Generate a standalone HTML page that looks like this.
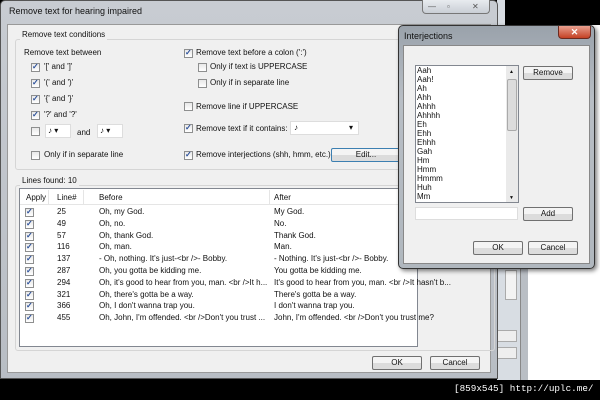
<!DOCTYPE html>
<html><head><meta charset="utf-8"><style>
*{box-sizing:border-box;margin:0;padding:0}
body{width:600px;height:400px;overflow:hidden;background:#000;position:relative;font-family:"Liberation Sans",sans-serif;font-size:8px;color:#111}
.a{position:absolute}
.t{position:absolute;white-space:nowrap;font-size:8px;line-height:10px}
.cb{position:absolute;width:9px;height:9px;border:1px solid #8e8f8f;background:linear-gradient(#e8e8e8,#fff)}
.cb.c::after{content:"✓";position:absolute;left:0px;top:-2px;font-size:8px;color:#2a4f99;font-weight:bold}
.btn{position:absolute;border:1px solid #707070;border-radius:2px;background:linear-gradient(#f4f4f4 50%,#dcdcdc 50%);font-size:8px;text-align:center;line-height:12px}
</style></head><body>
<div class="a" style="left:497px;top:0;width:32px;height:380px;background:#d8dde3"></div>
<div class="a" style="left:505px;top:0;width:95px;height:25px;background:#000"></div>
<div class="a" style="left:520px;top:25px;width:8px;height:355px;background:#b9bec4;border-left:1px solid #888"></div>
<div class="a" style="left:528px;top:25px;width:72px;height:355px;background:#fff"></div>
<div class="a" style="left:505px;top:270px;width:12px;height:30px;background:#f3f3f3;border:1px solid #aaa"></div>
<div class="a" style="left:497px;top:330px;width:20px;height:12px;background:#eee;border:1px solid #aaa"></div>
<div class="a" style="left:497px;top:347px;width:20px;height:12px;background:#eee;border:1px solid #aaa"></div>
<div class="a" style="left:0;top:0;width:498px;height:379px;background:linear-gradient(#c8ccd2,#b8bdc4);border:1px solid #555;border-radius:5px 5px 0 0"></div>
<div class="t" style="left:9px;top:6px;font-size:9px">Remove text for hearing impaired</div>
<div class="a" style="left:422px;top:0;width:68px;height:14px;border:1px solid #777;border-top:none;border-radius:0 0 4px 4px;background:linear-gradient(#e8ebef,#c9ced5)"></div>
<div class="t" style="left:428px;top:2px;color:#555">—</div>
<div class="t" style="left:447px;top:2px;color:#555">▫</div>
<div class="t" style="left:472px;top:2px;color:#555">✕</div>
<div class="a" style="left:7px;top:24px;width:484px;height:349px;background:#f0f0f0;border:1px solid #999"></div>
<div class="a" style="left:15px;top:39px;width:480px;height:131px;border:1px solid #d5d5d5;border-radius:3px"></div>
<div class="t" style="left:20px;top:30px;background:#f0f0f0;padding:0 2px">Remove text conditions</div>
<div class="t" style="left:24px;top:48px">Remove text between</div>
<div class="cb c" style="left:31px;top:63px"></div><div class="t" style="left:44px;top:62px">'[' and ']'</div>
<div class="cb c" style="left:31px;top:79px"></div><div class="t" style="left:44px;top:78px">'(' and ')'</div>
<div class="cb c" style="left:31px;top:95px"></div><div class="t" style="left:44px;top:94px">'{' and '}'</div>
<div class="cb c" style="left:31px;top:111px"></div><div class="t" style="left:44px;top:110px">'?' and '?'</div>
<div class="cb" style="left:31px;top:127px"></div>
<div class="a" style="left:45px;top:124px;width:26px;height:14px;background:#fff;border:1px solid #ddd"></div><div class="t" style="left:48px;top:126px">♪ ▾</div>
<div class="t" style="left:77px;top:128px">and</div>
<div class="a" style="left:97px;top:124px;width:26px;height:14px;background:#fff;border:1px solid #ddd"></div><div class="t" style="left:100px;top:126px">♪ ▾</div>
<div class="cb" style="left:31px;top:151px"></div><div class="t" style="left:44px;top:150px">Only if in separate line</div>
<div class="cb c" style="left:184px;top:49px"></div><div class="t" style="left:196px;top:48px">Remove text before a colon (':')</div>
<div class="cb" style="left:198px;top:63px"></div><div class="t" style="left:210px;top:62px">Only if text is UPPERCASE</div>
<div class="cb" style="left:198px;top:79px"></div><div class="t" style="left:210px;top:78px">Only if in separate line</div>
<div class="cb" style="left:184px;top:102px"></div><div class="t" style="left:196px;top:102px">Remove line if UPPERCASE</div>
<div class="cb c" style="left:184px;top:124px"></div><div class="t" style="left:196px;top:124px">Remove text if it contains:</div>
<div class="a" style="left:290px;top:121px;width:69px;height:14px;background:#fff;border:1px solid #ddd"></div><div class="t" style="left:294px;top:123px">♪</div><div class="t" style="left:349px;top:123px">▾</div>
<div class="cb c" style="left:184px;top:151px"></div><div class="t" style="left:196px;top:150px">Remove interjections (shh, hmm, etc.)</div>
<div class="btn" style="left:331px;top:148px;width:70px;height:14px;border-color:#3c7fb1">Edit...</div>
<div class="a" style="left:15px;top:185px;width:480px;height:166px;border:1px solid #d5d5d5;border-radius:3px"></div>
<div class="t" style="left:20px;top:176px;background:#f0f0f0;padding:0 2px">Lines found: 10</div>
<div class="a" style="left:19px;top:188px;width:399px;height:159px;background:#fff;border:1px solid #828790"></div>
<div class="a" style="left:20px;top:189px;width:398px;height:16px;background:#fff;border-bottom:1px solid #e5e5e5"></div>
<div class="a" style="left:48px;top:190px;width:1px;height:14px;background:#e5e5e5"></div>
<div class="a" style="left:83px;top:190px;width:1px;height:14px;background:#e5e5e5"></div>
<div class="a" style="left:269px;top:190px;width:1px;height:14px;background:#e5e5e5"></div>
<div class="t" style="left:26px;top:193px">Apply</div><div class="t" style="left:57px;top:193px">Line#</div><div class="t" style="left:99px;top:193px">Before</div><div class="t" style="left:274px;top:193px">After</div>
<div id="rows"></div>
<div class="btn" style="left:372px;top:356px;width:50px;height:14px">OK</div>
<div class="btn" style="left:430px;top:356px;width:50px;height:14px">Cancel</div>
<div class="a" style="left:398px;top:25px;width:197px;height:244px;background:linear-gradient(#9aa2ab,#b8bec5 30%,#b0b7be);border:1px solid #333;border-radius:5px;box-shadow:2px 2px 4px rgba(0,0,0,.5)"></div>
<div class="t" style="left:404px;top:31px;font-size:9px">Interjections</div>
<div class="a" style="left:558px;top:26px;width:33px;height:13px;background:linear-gradient(#e8a08f,#c44125);border:1px solid #6b2a20;border-top:none;border-radius:0 0 4px 4px;color:#fff;text-align:center;font-size:9px;line-height:12px;font-weight:bold">✕</div>
<div class="a" style="left:403px;top:45px;width:187px;height:219px;background:#f0f0f0;border:1px solid #888"></div>
<div class="a" style="left:415px;top:65px;width:104px;height:138px;background:#fff;border:1px solid #828790"></div>
<div class="a" style="left:506px;top:66px;width:12px;height:136px;background:#eaeaea"></div>
<div class="a" style="left:507px;top:79px;width:10px;height:52px;background:#dcdcdc;border:1px solid #aaa;border-radius:2px"></div>
<div class="t" style="left:509px;top:67px;font-size:5px">▲</div><div class="t" style="left:509px;top:193px;font-size:5px">▼</div>
<div id="ij"></div>
<div class="btn" style="left:523px;top:66px;width:50px;height:14px">Remove</div>
<div class="a" style="left:415px;top:207px;width:103px;height:13px;background:#fff;border:1px solid #ddd"></div>
<div class="btn" style="left:523px;top:207px;width:50px;height:14px">Add</div>
<div class="btn" style="left:473px;top:241px;width:50px;height:14px">OK</div>
<div class="btn" style="left:528px;top:241px;width:50px;height:14px">Cancel</div>
<div class="t" style="left:454px;top:382px;color:#fff;font-family:'Liberation Mono',monospace;font-size:9.3px;line-height:14px;letter-spacing:0px">[859x545] http://uplc.me/</div>
<script>
var r=[["25","Oh, my God.","My God."],["49","Oh, no.","No."],["57","Oh, thank God.","Thank God."],["116","Oh, man.","Man."],["137","- Oh, nothing. It's just-&lt;br /&gt;- Bobby.","- Nothing. It's just-&lt;br /&gt;- Bobby."],["287","Oh, you gotta be kidding me.","You gotta be kidding me."],["294","Oh, it's good to hear from you, man. &lt;br /&gt;It h...","It's good to hear from you, man. &lt;br /&gt;It hasn't b..."],["321","Oh, there's gotta be a way.","There's gotta be a way."],["366","Oh, I don't wanna trap you.","I don't wanna trap you."],["455","Oh, John, I'm offended. &lt;br /&gt;Don't you trust ...","John, I'm offended. &lt;br /&gt;Don't you trust me?"]];
var h="";r.forEach(function(x,i){var y=207+i*11.8;h+='<div class="cb c" style="left:25px;top:'+(y+1)+'px"></div><div class="t" style="left:57px;top:'+y+'px">'+x[0]+'</div><div class="t" style="left:99px;top:'+y+'px">'+x[1]+'</div><div class="t" style="left:274px;top:'+y+'px">'+x[2]+'</div>';});
document.getElementById("rows").innerHTML=h;
var w=["Aah","Aah!","Ah","Ahh","Ahhh","Ahhhh","Eh","Ehh","Ehhh","Gah","Hm","Hmm","Hmmm","Huh","Mm"];h="";
w.forEach(function(x,i){h+='<div class="t" style="left:417px;top:'+(66+i*9)+'px;font-size:8px;line-height:9px">'+x+'</div>';});
document.getElementById("ij").innerHTML=h;
</script>
</body></html>
